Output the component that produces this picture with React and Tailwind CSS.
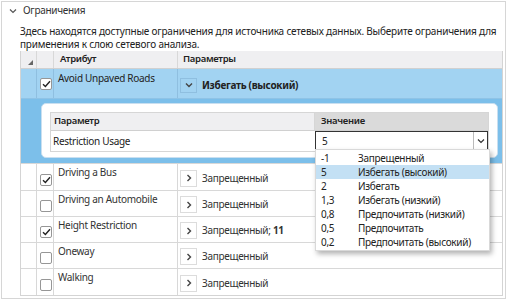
import React from 'react';

const rows = [
  { name: 'Driving a Bus', checked: true, value: 'Запрещенный', h: 'h-[27px]' },
  { name: 'Driving an Automobile', checked: false, value: 'Запрещенный', h: 'h-[26px]' },
  { name: 'Height Restriction', checked: true, value: 'Запрещенный; ', extra: '11', h: 'h-[26px]' },
  { name: 'Oneway', checked: false, value: 'Запрещенный', h: 'h-[26px]' },
  { name: 'Walking', checked: false, value: 'Запрещенный', h: 'h-[27px]' },
];

const options = [
  ['-1', 'Запрещенный'],
  ['5', 'Избегать (высокий)'],
  ['2', 'Избегать'],
  ['1,3', 'Избегать (низкий)'],
  ['0,8', 'Предпочитать (низкий)'],
  ['0,5', 'Предпочитать'],
  ['0,2', 'Предпочитать (высокий)'],
];

function Check({ checked }) {
  return (
    <div className="w-[12px] h-[12px] rounded-[2px] border border-[#969696] bg-white flex items-center justify-center">
      {checked && (
        <svg width="9" height="8" viewBox="0 0 9 8">
          <path d="M1 4.2 L3.4 6.5 L8 1.3" fill="none" stroke="#222" strokeWidth="1.4" />
        </svg>
      )}
    </div>
  );
}

function ExpandBtn() {
  return (
    <div className="w-[17px] h-[17px] border border-[#dcdcdc] bg-white flex items-center justify-center shrink-0">
      <svg width="6" height="8" viewBox="0 0 6 8"><path d="M1.5 1 L4.5 4 L1.5 7" fill="none" stroke="#444" strokeWidth="1.4" /></svg>
    </div>
  );
}

export default function App() {
  return (
    <div className="w-[507px] h-[300px] bg-white relative overflow-hidden text-[#222]" style={{ fontFamily: '"Noto Sans", sans-serif' }}>
      <div className="absolute left-[1px] top-[1px] w-[505px] h-[298px] border border-[#d6d6d6] pointer-events-none" />
      <div className="flex items-center h-[20px] pt-[1px] pl-[9px]">
        <svg width="8" height="6" viewBox="0 0 8 6" className="mr-[6px]"><path d="M1 1.5 L4 4.5 L7 1.5" fill="none" stroke="#555" strokeWidth="1.2" /></svg>
        <span className="text-[10px] tracking-[-0.3px] text-[#333]">Ограничения</span>
      </div>
      <div className="pl-[20px] pr-[3px] pt-[5px] text-[10px] leading-[12.5px] text-[#222] tracking-[-0.2px]">
        Здесь находятся доступные ограничения для источника сетевых данных. Выберите ограничения для применения к слою сетевого анализа.
      </div>
      <div className="ml-[20px] mt-[1px] w-[483px] border-l border-r border-b border-[#d4d4d4] text-[10px] tracking-[-0.3px]">
        <div className="flex h-[18px] bg-[#efeff1] border-b border-[#d0d0d0] font-semibold text-[9.5px]">
          <div className="w-[16px] border-r border-[#d8d8d8] relative">
            <div className="absolute right-[3px] bottom-[3px] w-0 h-0 border-l-[5px] border-l-transparent border-b-[5px] border-b-[#666]" />
          </div>
          <div className="w-[17px] border-r border-[#d8d8d8]" />
          <div className="w-[124px] border-r border-[#d8d8d8] pl-[6px] flex items-center">Атрибут</div>
          <div className="flex-1 pl-[5px] flex items-center">Параметры</div>
        </div>
        <div className="bg-[#a2d3f2]">
          <div className="flex h-[30px] border-b border-[#8fc3e6]">
            <div className="w-[16px] border-r border-[#8fbfe0]" />
            <div className="w-[17px] border-r border-[#8fbfe0] flex items-end pb-[8px] pl-[3px]"><Check checked /></div>
            <div className="w-[124px] border-r border-[#8fbfe0] pl-[4px] pt-[2px]">Avoid Unpaved Roads</div>
            <div className="flex-1 flex items-center pl-[2px] pt-[3px] gap-[5px]">
              <div className="w-[17px] h-[15px] border border-[#8fbfe0] bg-[#a2d3f2] flex items-center justify-center">
                <svg width="8" height="6" viewBox="0 0 8 6"><path d="M1 1.5 L4 4.5 L7 1.5" fill="none" stroke="#444" strokeWidth="1.4" /></svg>
              </div>
              <span className="font-bold">Избегать (высокий)</span>
            </div>
          </div>
          <div className="pl-[20px] pr-[4px] pt-[4px] pb-[5px] bg-[#7cbfea]">
            <div className="bg-white rounded-[5px] border border-[#c9dff0] px-[8px] pt-[8px] pb-[5px]">
              <div className="border border-[#d6d6d6]">
                <div className="flex h-[18px] font-semibold border-b border-[#d0d0d0] text-[9.5px]">
                  <div className="w-[264px] bg-[#efeff1] border-r border-[#d6d6d6] pl-[3px] flex items-center">Параметр</div>
                  <div className="flex-1 bg-[#dadada] pl-[6px] flex items-center">Значение</div>
                </div>
                <div className="flex h-[20px]">
                  <div className="w-[264px] pl-[2px] flex items-center">Restriction Usage</div>
                  <div className="flex-1 border border-[#333] flex items-center">
                    <span className="pl-[6px] flex-1">5</span>
                    <div className="w-[14px] h-full border-l border-[#bbb] flex items-center justify-center">
                      <svg width="8" height="6" viewBox="0 0 8 6"><path d="M1 1.5 L4 4.5 L7 1.5" fill="none" stroke="#333" strokeWidth="1.2" /></svg>
                    </div>
                  </div>
                </div>
              </div>
            </div>
          </div>
        </div>
        {rows.map((r) => (
          <div key={r.name} className={`flex ${r.h} border-t border-[#d8d8d8] first:border-t-0`}>
            <div className="w-[16px] border-r border-[#d8d8d8]" />
            <div className="w-[17px] border-r border-[#d8d8d8] flex items-end pb-[4px] pl-[3px]"><Check checked={r.checked} /></div>
            <div className="w-[124px] border-r border-[#d8d8d8] pl-[4px] pt-[1px] text-[#333]">{r.name}</div>
            <div className="flex-1 flex items-center pl-[2px] pt-[2px] gap-[5px] text-[#333]">
              <ExpandBtn />
              <span>{r.value}{r.extra && <b>{r.extra}</b>}</span>
            </div>
          </div>
        ))}
      </div>
      <div className="absolute left-[315px] top-[149px] w-[175px] bg-white border border-[#d9d9d9] shadow-[2px_3px_5px_rgba(0,0,0,0.3)] py-[1px] text-[10px] tracking-[-0.3px] text-[#222]">
        {options.map(([v, l]) => (
          <div key={v} className={`flex h-[14px] items-center ${v === '5' ? 'bg-[#c3e0f4]' : ''}`}>
            <span className="w-[42px] pl-[5px]">{v}</span>
            <span>{l}</span>
          </div>
        ))}
      </div>
    </div>
  );
}
